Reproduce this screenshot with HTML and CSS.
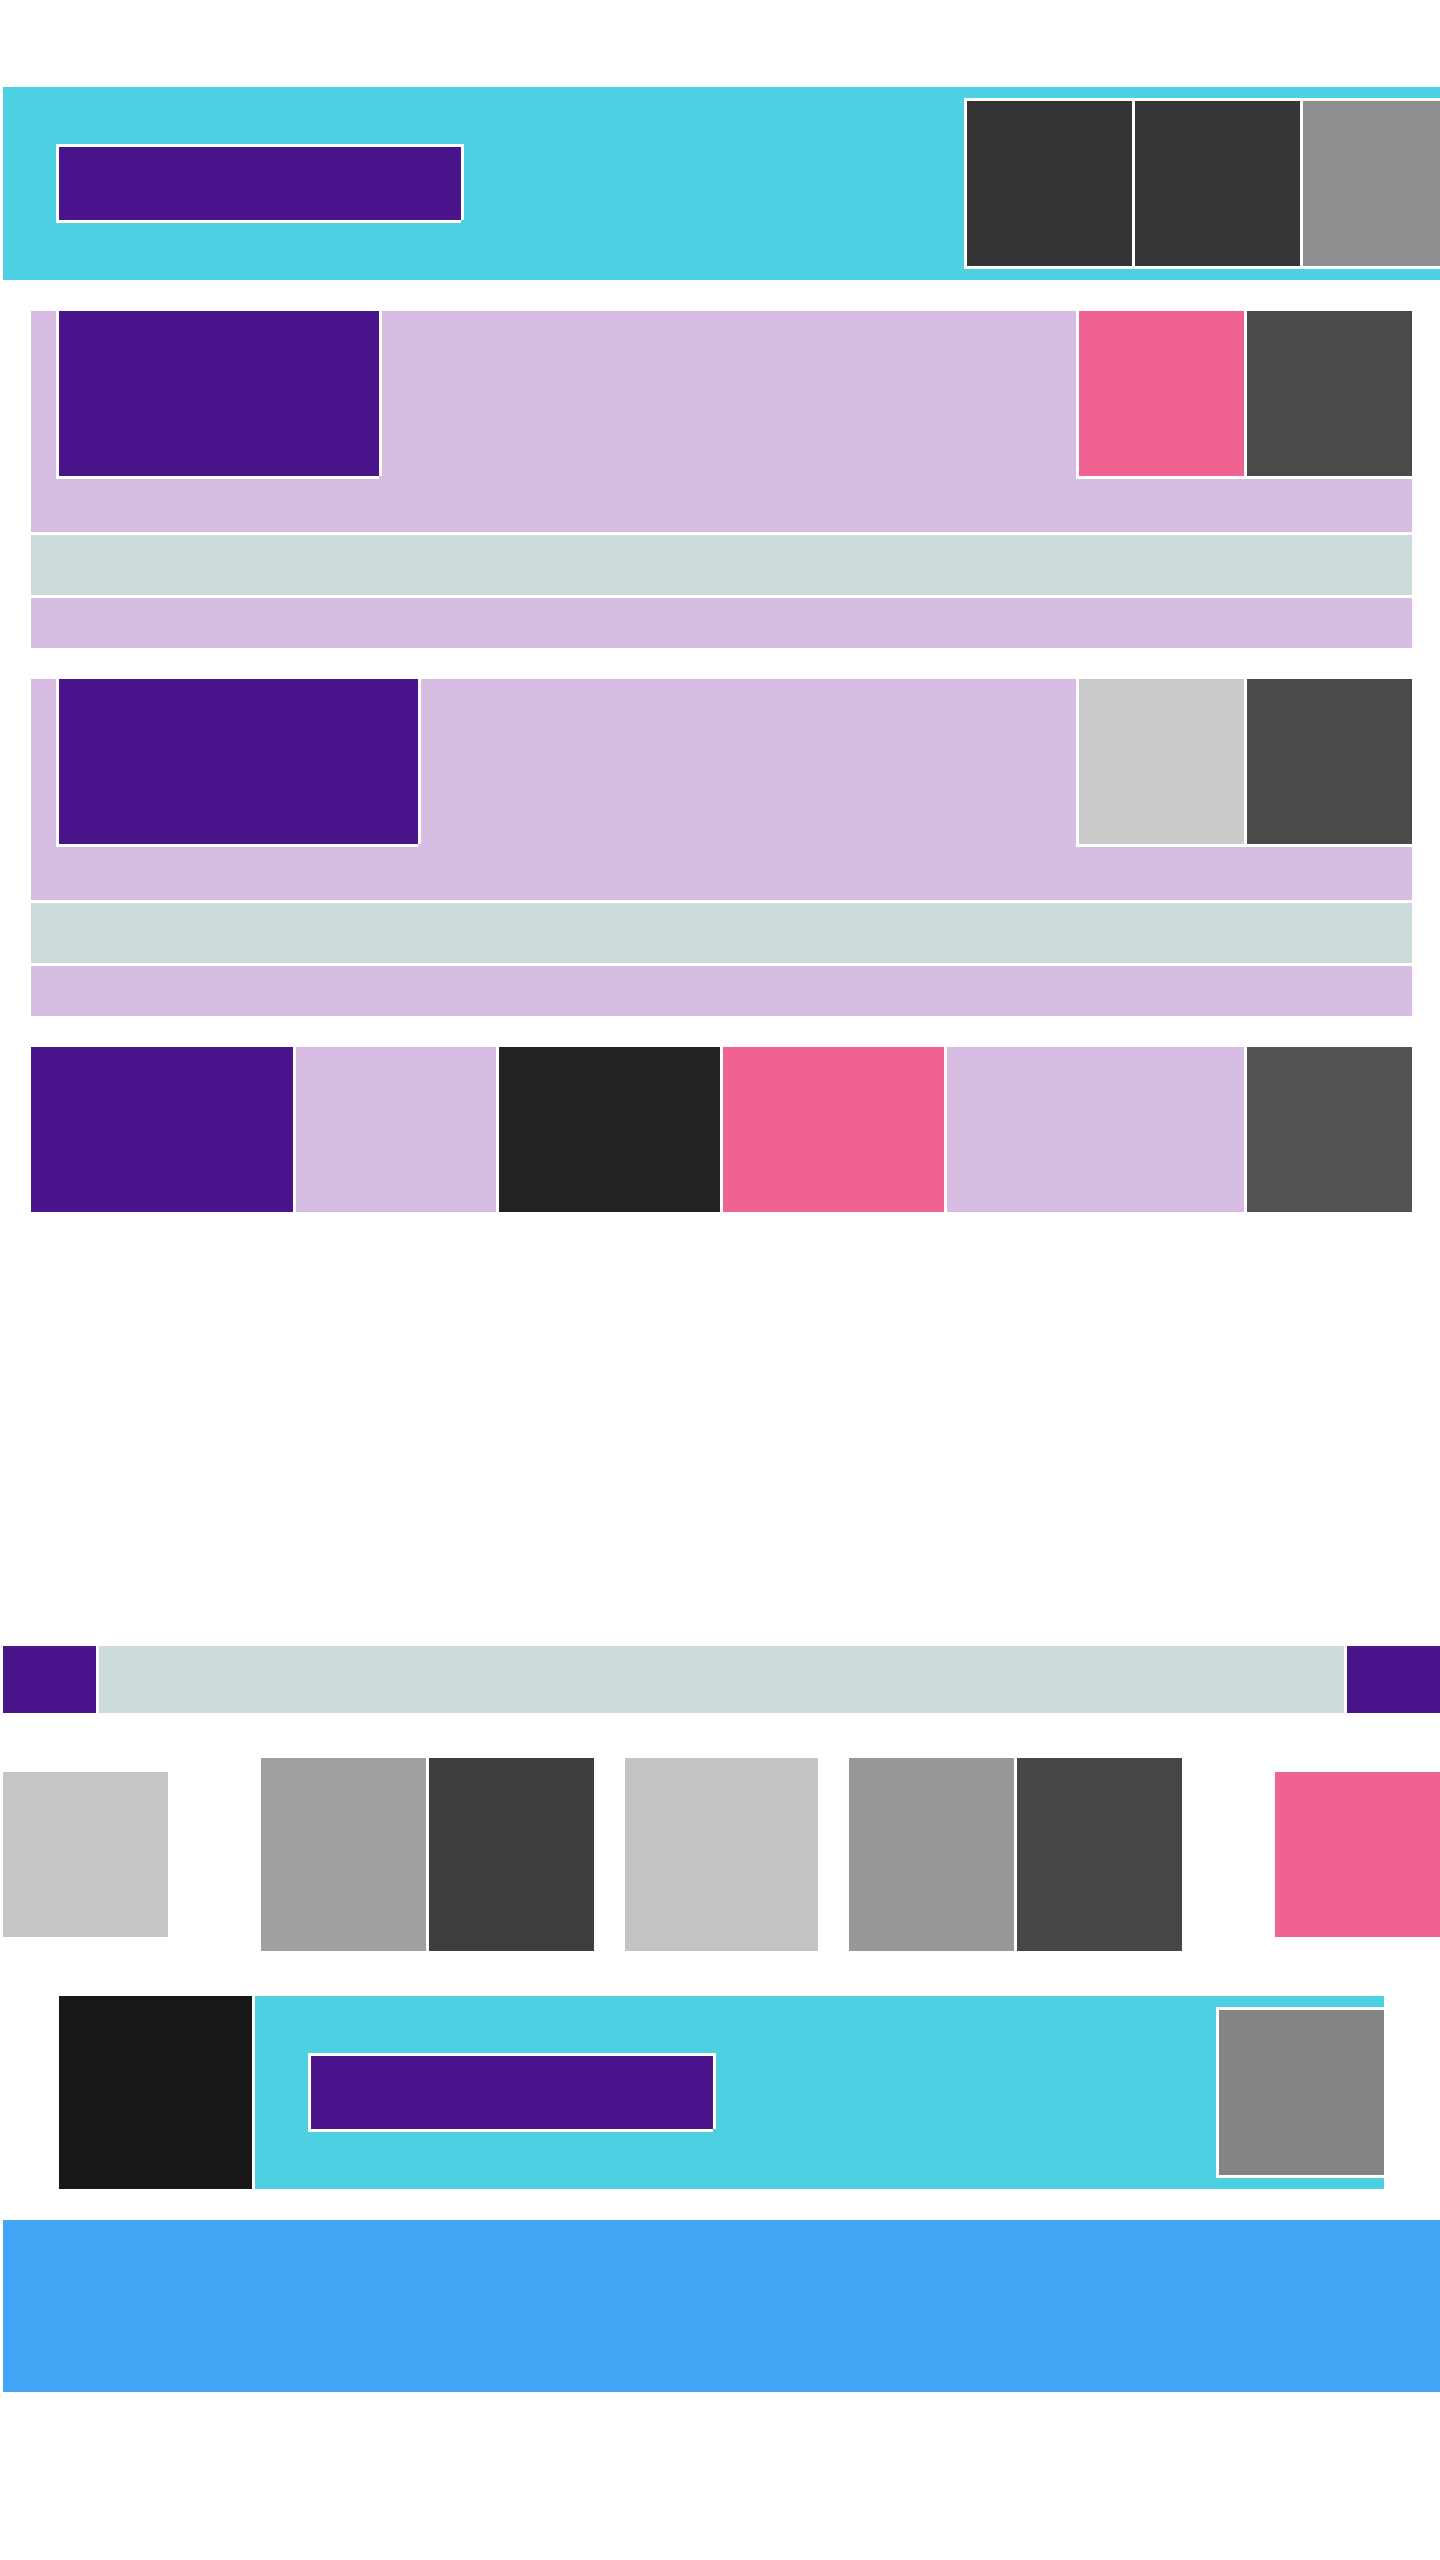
FILE: index.html
```html
<!DOCTYPE html>
<html lang="en">
<head>
<meta charset="utf-8">
<meta name="viewport" content="width=device-width, initial-scale=1">
<title>Layout blocks</title>
<link rel="stylesheet" href="styles.css">
</head>
<body>
<div class="page">
  <header class="banner">
    <div class="label outlined purple"></div>
    <div class="actions">
      <div class="tile gray-20"></div>
      <div class="tile gray-21"></div>
      <div class="tile tile-cut gray-55"></div>
    </div>
  </header>

  <main class="content">
    <section class="card">
      <div class="card-head lilac">
        <div class="card-title outlined purple"></div>
        <div class="actions actions-top">
          <div class="tile pink"></div>
          <div class="tile gray-29"></div>
        </div>
      </div>
      <div class="card-body mist"></div>
      <div class="card-foot lilac"></div>
    </section>

    <section class="card">
      <div class="card-head lilac">
        <div class="card-title card-title-wide outlined purple"></div>
        <div class="actions actions-top">
          <div class="tile gray-79"></div>
          <div class="tile gray-29"></div>
        </div>
      </div>
      <div class="card-body mist"></div>
      <div class="card-foot lilac"></div>
    </section>

    <section class="strip">
      <div class="purple"></div>
      <div class="lilac"></div>
      <div class="gray-13"></div>
      <div class="pink"></div>
      <div class="lilac"></div>
      <div class="gray-32"></div>
    </section>
  </main>

  <section class="slider">
    <div class="purple"></div>
    <div class="mist"></div>
    <div class="purple"></div>
  </section>

  <section class="controls">
    <div class="tile gray-77"></div>
    <div class="control-groups">
      <div class="pair">
        <div class="tile tile-tall gray-62"></div>
        <div class="tile tile-tall gray-24"></div>
      </div>
      <div class="tile tile-large gray-76"></div>
      <div class="pair">
        <div class="tile tile-tall gray-59"></div>
        <div class="tile tile-tall gray-27"></div>
      </div>
    </div>
    <div class="tile pink"></div>
  </section>

  <section class="feature">
    <div class="tile tile-large gray-9"></div>
    <div class="banner banner-fill">
      <div class="label outlined purple"></div>
      <div class="actions">
        <div class="tile gray-51"></div>
      </div>
    </div>
  </section>

  <footer class="footer"></footer>
</div>
</body>
</html>
```

FILE: styles.css
```css
* {
  box-sizing: border-box;
}

body {
  margin: 0;
  background: #fff;
  font-family: "Liberation Sans", sans-serif;
}

.page {
  padding: 87px 0 168px 3px;
}

/* Colours */
.purple { background: #4a148c; }
.lilac { background: #d7bde2; }
.mist { background: #cddbdc; }
.pink { background: #f06292; }
.gray-9 { background: #171717; }
.gray-13 { background: #222; }
.gray-20 { background: #343434; }
.gray-21 { background: #363636; }
.gray-24 { background: #3e3e3e; }
.gray-27 { background: #464646; }
.gray-29 { background: #4a4a4a; }
.gray-32 { background: #535353; }
.gray-51 { background: #848484; }
.gray-55 { background: #8e8e8e; }
.gray-59 { background: #989898; }
.gray-62 { background: #a0a0a0; }
.gray-76 { background: #c4c4c4; }
.gray-77 { background: #c6c6c6; }
.gray-79 { background: #cacaca; }

/* White edge, left open at the bottom right corner */
.outlined {
  box-shadow:
    -3px -3px #fff,
    3px -3px #fff,
    -3px 3px #fff,
    3px 0 #fff,
    0 3px #fff;
}

/* Tiles */
.tile {
  flex: none;
  width: 165px;
  height: 165px;
}

.tile-tall {
  height: 193px;
}

.tile-large {
  width: 193px;
  height: 193px;
}

.tile-cut {
  width: 137px;
}

.actions {
  display: flex;
  gap: 3px;
  padding: 3px 0 3px 3px;
  background: #fff;
}

.actions-top {
  padding-top: 0;
}

/* Banner */
.banner {
  display: flex;
  align-items: center;
  justify-content: space-between;
  min-height: 193px;
  padding-left: 56px;
  background: #4dd0e1;
}

.banner-fill {
  flex: 1;
}

.label {
  width: 402px;
  height: 73px;
}

/* Cards */
.content {
  display: grid;
  gap: 31px;
  padding: 31px 28px 0;
}

.card {
  display: grid;
  gap: 3px;
}

.card-head {
  display: flex;
  align-items: flex-start;
  justify-content: space-between;
  min-height: 221px;
  padding-left: 28px;
  overflow: hidden;
}

.card-title {
  width: 320px;
  height: 165px;
}

.card-title-wide {
  width: 359px;
}

.card-body {
  height: 60px;
}

.card-foot {
  height: 50px;
}

.strip {
  display: grid;
  grid-template-columns: 262px 200px 221px 221px 1fr 165px;
  gap: 3px;
  height: 165px;
}

/* Slider */
.slider {
  display: grid;
  grid-template-columns: 93px 1fr 93px;
  gap: 3px;
  height: 67px;
  margin-top: 434px;
}

/* Controls */
.controls {
  display: flex;
  align-items: center;
  justify-content: space-between;
  margin-top: 45px;
}

.control-groups {
  display: flex;
  gap: 31px;
}

.pair {
  display: flex;
  gap: 3px;
}

/* Feature */
.feature {
  display: flex;
  gap: 3px;
  margin-top: 45px;
  padding: 0 56px;
}

.footer {
  height: 172px;
  margin-top: 31px;
  background: #42a5f5;
}
```
